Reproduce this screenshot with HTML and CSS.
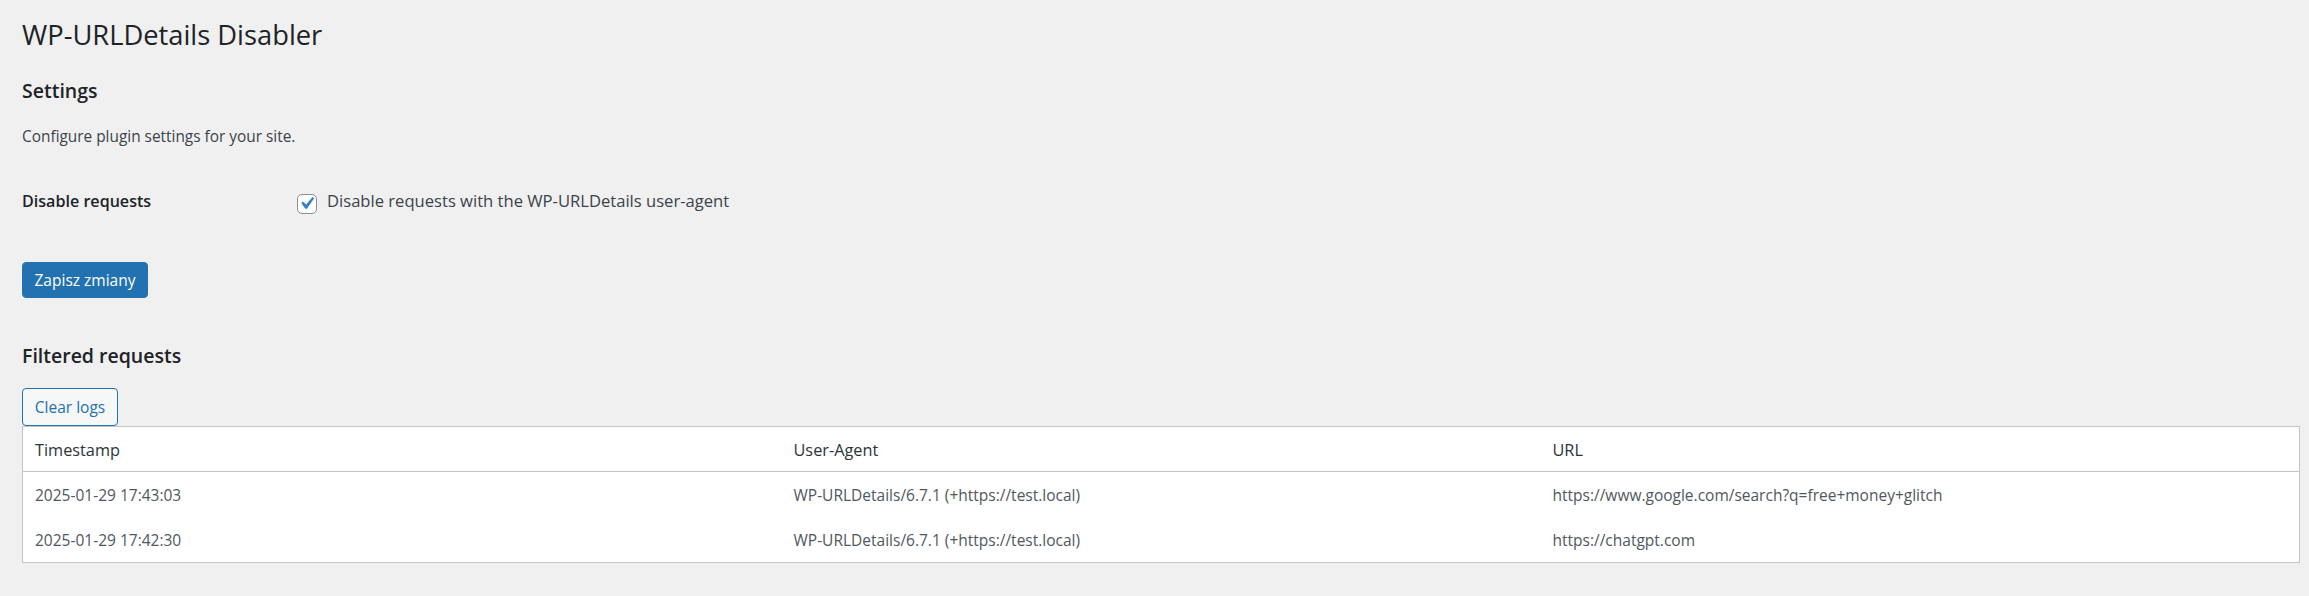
FILE: index.html
```html
<!DOCTYPE html>
<html lang="pl">
<head>
<meta charset="utf-8">
<title>WP-URLDetails Disabler</title>
<link rel="stylesheet" href="styles.css">
</head>
<body>
<div class="wrap">
  <h1 class="page-title">WP-URLDetails Disabler</h1>

  <h2 class="section-title section-title--settings">Settings</h2>
  <p class="section-desc">Configure plugin settings for your site.</p>

  <form class="settings-form">
    <div class="form-row">
      <div class="form-label">Disable requests</div>
      <label class="form-field">
        <span class="checkbox">
          <svg class="checkbox__mark" viewBox="0 0 20 20" width="25" height="25" aria-hidden="true">
            <path d="M14.83 4.89l1.34.94-5.81 8.38H9.02L5.78 9.67l1.34-1.25 2.57 2.4z" fill="#3582c4"/>
          </svg>
        </span>
        <span class="form-field__text">Disable requests with the WP-URLDetails user-agent</span>
      </label>
    </div>
    <button type="button" class="btn btn--primary">Zapisz zmiany</button>
  </form>

  <h2 class="section-title section-title--logs">Filtered requests</h2>
  <button type="button" class="btn btn--secondary">Clear logs</button>

  <table class="log-table">
    <thead>
      <tr>
        <th>Timestamp</th>
        <th>User-Agent</th>
        <th>URL</th>
      </tr>
    </thead>
    <tbody>
      <tr>
        <td>2025-01-29 17:43:03</td>
        <td>WP-URLDetails/6.7.1 (+https://test.local)</td>
        <td>https://www.google.com/search?q=free+money+glitch</td>
      </tr>
      <tr>
        <td>2025-01-29 17:42:30</td>
        <td>WP-URLDetails/6.7.1 (+https://test.local)</td>
        <td>https://chatgpt.com</td>
      </tr>
    </tbody>
  </table>
</div>
</body>
</html>
```
FILE: styles.css
```css
* { box-sizing: border-box; }

html, body {
  margin: 0;
  padding: 0;
  background: #f0f0f1;
}

body {
  font-family: "Open Sans", "Noto Sans", "Liberation Sans", sans-serif;
  color: #3c434a;
}

.wrap {
  padding: 0 9px 0 22px;
}

.page-title {
  margin: 17px 0 0;
  font-size: 27.3px;
  line-height: 36px;
  font-weight: 400;
  color: #1d2327;
}

.section-title {
  margin: 0;
  font-size: 19.5px;
  line-height: 26px;
  font-weight: 600;
  color: #1d2327;
}

.section-title--settings { margin-top: 25px; }
.section-title--logs { margin-top: 45px; }

.section-desc {
  margin: 22px 0 0;
  font-size: 15.4px;
  line-height: 22px;
  color: #3c434a;
}

.settings-form {
  margin: 0;
}

.form-row {
  display: grid;
  grid-template-columns: 275px 1fr;
  align-items: start;
  margin-top: 42px;
}

.form-label {
  font-size: 16.1px;
  line-height: 22px;
  font-weight: 600;
  color: #1d2327;
}

.form-field {
  display: flex;
  align-items: flex-start;
  gap: 10px;
  font-size: 16.6px;
  line-height: 22px;
  color: #3c434a;
}

.checkbox {
  position: relative;
  flex: none;
  width: 20px;
  height: 20px;
  margin-top: 4px;
  background: #fff;
  border: 1px solid #8c8f94;
  border-radius: 5px;
}

.checkbox__mark {
  position: absolute;
  left: -4px;
  top: -4px;
}

.btn {
  display: flex;
  align-items: center;
  justify-content: center;
  font-family: inherit;
  font-size: 15.5px;
  line-height: 22px;
  white-space: nowrap;
  border-radius: 4px;
  cursor: pointer;
  padding: 0;
}

.btn--primary {
  margin-top: 48px;
  width: 126px;
  height: 36px;
  background: #2271b1;
  border: 1px solid #2271b1;
  color: #fff;
}

.btn--secondary {
  margin-top: 19px;
  width: 96px;
  height: 38px;
  background: #f6f7f7;
  border: 1px solid #2271b1;
  color: #2271b1;
}

.log-table {
  width: 100%;
  table-layout: fixed;
  border-collapse: collapse;
  background: #fff;
  border: 1px solid #c3c4c7;
}

.log-table th,
.log-table td {
  text-align: left;
  padding: 12px 12px 11px;
  line-height: 22px;
  white-space: nowrap;
  overflow: hidden;
}

.log-table th {
  font-weight: 400;
  font-size: 16.3px;
  color: #2c3338;
  padding-bottom: 10px;
  border-bottom: 1px solid #c3c4c7;
}

.log-table td {
  font-size: 15.5px;
  color: #50575e;
}
```
